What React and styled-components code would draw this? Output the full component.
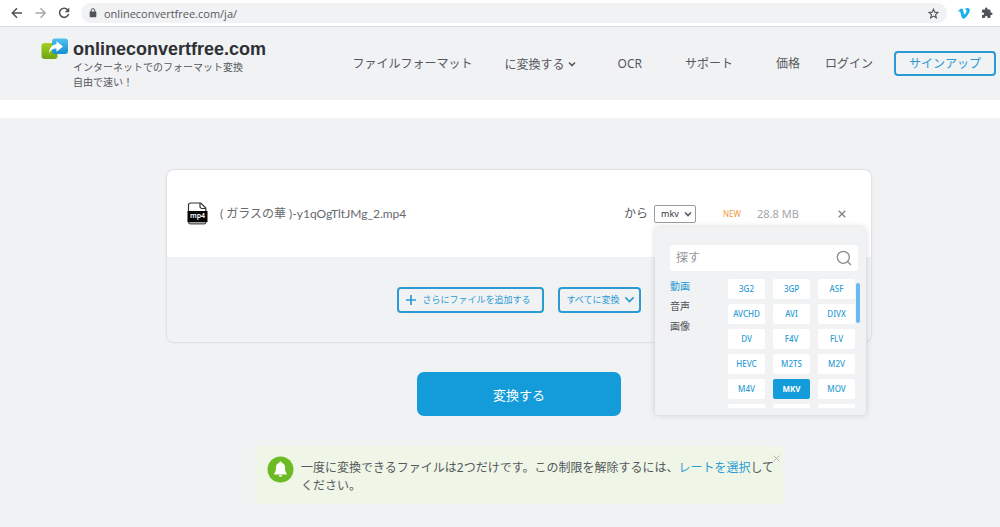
import React, { useState } from "react";
import styled, { createGlobalStyle } from "styled-components";

const GlobalStyle = createGlobalStyle`
  * {
    box-sizing: border-box;
  }
  body {
    margin: 0;
    background-color: #f1f2f4;
    color: #55585c;
    font-family: "Noto Sans", "Noto Sans CJK JP", sans-serif;
    font-size: 12px;
    line-height: 18px;
  }
  button,
  input,
  select {
    font-family: inherit;
  }
  a {
    text-decoration: none;
  }
  svg {
    display: block;
    flex: none;
  }
`;

const BrowserBar = styled.div`
  display: flex;
  align-items: center;
  gap: 11px;
  height: 27px;
  padding: 0 7px 0 10px;
  background-color: #fff;
  border-bottom: 1px solid #dcdde0;
`;

const IconButton = styled.button`
  display: flex;
  padding: 0;
  border: none;
  background: none;
  color: ${({ $color }) => $color || "#505357"};
  cursor: pointer;
`;

const AddressBar = styled.div`
  flex: 1;
  display: flex;
  align-items: center;
  gap: 7px;
  height: 20px;
  padding: 0 8px;
  border-radius: 10px;
  background-color: #f1f2f4;
`;

const Address = styled.input`
  flex: 1;
  padding: 0;
  border: none;
  outline: none;
  background: none;
  color: #55585c;
  font-family: "Open Sans", sans-serif;
  font-size: 11px;
`;

const Header = styled.header`
  display: flex;
  align-items: center;
  justify-content: space-between;
  height: 73px;
  padding: 0 4px 0 41px;
`;

const Brand = styled.a`
  display: flex;
  gap: 5px;
  color: #55585c;
`;

const BrandName = styled.div`
  color: #2d3036;
  font-family: "Liberation Sans", sans-serif;
  font-size: 18px;
  font-weight: 700;
  line-height: 22px;
`;

const Tagline = styled.div`
  font-size: 10px;
  line-height: 15px;
`;

const Nav = styled.nav`
  display: flex;
  align-items: center;
  gap: 32px;
`;

const NavLink = styled.a`
  margin-right: ${({ $wide }) => ($wide ? "11px" : "0")};
  color: #55585c;
`;

const NavMenu = styled.button`
  display: flex;
  align-items: center;
  gap: 3px;
  margin-right: 10px;
  padding: 0;
  border: none;
  background: none;
  color: #55585c;
  font-size: 12px;
  cursor: pointer;
`;

const Account = styled.div`
  display: flex;
  align-items: center;
  gap: 21px;
  margin-left: -7px;
`;

const SignUp = styled.a`
  padding: 2px 13px;
  border: 2px solid #2b9bd4;
  border-radius: 4px;
  color: #2b9bd4;
  line-height: 17px;
`;

const Strip = styled.div`
  height: 18px;
  background-color: #fff;
`;

const Main = styled.main`
  display: flex;
  flex-direction: column;
  align-items: center;
  padding: 51px 0 24px 38px;
`;

const Card = styled.section`
  width: 100%;
  max-width: 706px;
  border: 1px solid #e0e2e5;
  border-radius: 8px;
  box-shadow: 0 0 3px rgba(0, 0, 0, 0.06);
`;

const FileRow = styled.div`
  display: flex;
  align-items: center;
  height: 87px;
  padding: 0 25px 0 20px;
  border-radius: 8px 8px 0 0;
  background-color: #fff;
`;

const FileName = styled.span`
  flex: 1;
  margin-left: 12px;
  color: #66696d;
  font-family: Lato, "Noto Sans CJK JP", sans-serif;
`;

const TargetLabel = styled.label`
  margin-right: 6px;
`;

const Target = styled.div`
  position: relative;
  display: flex;
  align-items: center;
`;

const TargetSelect = styled.select`
  width: 42px;
  height: 18px;
  padding: 0 0 0 6px;
  appearance: none;
  border: 1px solid #9a9da1;
  border-radius: 2px;
  background-color: #fff;
  color: #33363a;
  font-size: 9px;
`;

const SelectArrow = styled.span`
  position: absolute;
  right: 4px;
  pointer-events: none;
`;

const NewBadge = styled.span`
  margin-left: 27px;
  color: #f09a45;
  font-size: 8px;
`;

const FileSize = styled.span`
  width: 81px;
  margin-left: 16px;
  color: #a3a6aa;
  font-size: 11px;
`;

const Popup = styled.div`
  position: absolute;
  z-index: 1;
  top: 22px;
  left: 1px;
  width: 211px;
  padding: 18px 8px 7px 15px;
  border-radius: 4px;
  background-color: #f1f2f4;
  box-shadow: 0 0 6px rgba(0, 0, 0, 0.16);
`;

const Search = styled.div`
  display: flex;
  align-items: center;
  height: 26px;
  margin-bottom: 8px;
  padding: 0 6px;
  border-radius: 3px;
  background-color: #fff;
  color: #8a8d91;
`;

const SearchInput = styled.input`
  flex: 1;
  min-width: 0;
  padding: 0;
  border: none;
  outline: none;
  background: none;
  font-size: 12px;

  &::placeholder {
    color: #94979b;
  }
`;

const PopupBody = styled.div`
  display: flex;
  align-items: flex-start;
  margin-right: -2px;
`;

const Categories = styled.div`
  flex: 1;
  display: flex;
  flex-direction: column;
  align-items: flex-start;
`;

const Category = styled.button`
  padding: 0;
  border: none;
  background: none;
  color: ${({ $active }) => ($active ? "#2b9bd4" : "#505357")};
  font-size: 10px;
  line-height: 20px;
  margin-top: -3px;
  margin-bottom: 3px;
  cursor: pointer;
`;

const Formats = styled.div`
  display: grid;
  grid-template-columns: repeat(3, 37px);
  grid-auto-rows: 20px;
  gap: 5px 8px;
  height: 129px;
  overflow-y: auto;
  scrollbar-width: none;
`;

const Format = styled.button`
  padding: 0;
  border: none;
  border-radius: 2px;
  background-color: ${({ $active }) => ($active ? "#149bd9" : "#fff")};
  color: ${({ $active }) => ($active ? "#fff" : "#2b9bd4")};
  font-size: 8px;
  font-weight: ${({ $active }) => ($active ? 700 : 500)};
  cursor: pointer;
`;

const ScrollThumb = styled.div`
  width: 4px;
  height: 40px;
  margin: 4px 0 0 1px;
  border-radius: 2px;
  background-color: #6cb8f3;
`;

const CardActions = styled.div`
  display: flex;
  align-items: center;
  justify-content: center;
  gap: 14px;
  height: 85px;
`;

const OutlineButton = styled.button`
  display: flex;
  align-items: center;
  gap: ${({ $gap }) => $gap};
  height: 26px;
  padding: ${({ $padding }) => $padding};
  border: 2px solid #2b9bd4;
  border-radius: 4px;
  background: none;
  color: #2b9bd4;
  font-size: 9px;
  cursor: pointer;
`;

const ConvertButton = styled.button`
  width: 204px;
  height: 44px;
  margin-top: 29px;
  border: none;
  border-radius: 7px;
  background-color: #149bd9;
  color: #fff;
  font-size: 13px;
  cursor: pointer;
`;

const Notice = styled.aside`
  position: relative;
  display: flex;
  gap: 7px;
  width: 100%;
  max-width: 528px;
  margin-top: 30px;
  padding: 10px 6px 9px 12px;
  background-color: #eff6e7;
`;

const NoticeText = styled.p`
  margin: 3px 0 0;
`;

const NoticeLink = styled.a`
  color: #2b9bd4;
`;

const NoticeClose = styled(IconButton)`
  position: absolute;
  top: 9px;
  right: 3px;
`;

const Chevron = ({ size = 8, width = 1.6 }) => (
  <svg width={size} height={size} viewBox="0 0 8 8" fill="none" stroke="currentColor" strokeWidth={width}>
    <path d="M1 2.5 4 5.5 7 2.5" />
  </svg>
);

const Cross = ({ size = 8, width = 1.4 }) => (
  <svg width={size} height={size} viewBox="0 0 8 8" stroke="currentColor" strokeWidth={width}>
    <path d="M0.7 0.7 7.3 7.3M7.3 0.7 0.7 7.3" />
  </svg>
);

const ArrowIcon = ({ flip }) => (
  <svg width="13" height="12" viewBox="0 0 13 12" fill="none" stroke="currentColor" strokeWidth="1.5">
    <path d={flip ? "M1.5 6H11M6.5 1.3 11.2 6 6.5 10.7" : "M12 6H2.5M7 1.3 2.3 6 7 10.7"} />
  </svg>
);

const ReloadIcon = () => (
  <svg width="12" height="12" viewBox="0 0 12 12">
    <path d="M10 3.2A4.6 4.6 0 1 0 10.6 7" fill="none" stroke="currentColor" strokeWidth="1.5" />
    <path d="M11.3.6V5.2H6.7Z" fill="currentColor" />
  </svg>
);

const LockIcon = () => (
  <svg width="8" height="10" viewBox="0 0 8 10">
    <rect x="0.7" y="3.6" width="6.6" height="5.6" rx="0.6" fill="#505357" />
    <path d="M2.2 4V2.5a1.8 1.8 0 0 1 3.6 0V4" fill="none" stroke="#505357" />
  </svg>
);

const StarIcon = () => (
  <svg width="11" height="11" viewBox="0 0 24 24" fill="none" stroke="currentColor" strokeWidth="2.4">
    <path d="m12 2.5 2.8 6.6 7.1.6-5.4 4.7 1.7 7L12 17.600l-6.200 3.800 1.700-7L2.100 9.700l7.100-.6Z" />
  </svg>
);

const VimeoIcon = () => (
  <svg width="12" height="11" viewBox="0 0 24 22">
    <path
      d="M23.500 5.600c-.1 2.300-1.700 5.500-4.800 9.500C15.500 19.300 12.800 21.400 10.600 21.400c-1.400 0-2.500-1.300-3.500-3.800L5.200 10.500C4.500 8 3.700 6.700 2.900 6.700c-.2 0-.8.400-1.800 1L0 6.300C3.500 3.200 5.500 1.200 6.900 1.100c2-.2 3.300 1.200 3.800 4.200.8 5 1.400 7.600 2.100 7.600.6 0 1.500-1 2.700-2.900s1.800-3.300 1.900-4.300c.2-1.600-.5-2.400-1.900-2.400-.7 0-1.400.1-2.100.4C14.800.8 17.400-.7 20.500.3c2.200.1 3.200 1.900 3 5.300Z"
      fill="#1ab1e8"
    />
  </svg>
);

const PuzzleIcon = () => (
  <svg width="12" height="12" viewBox="0 0 24 24">
    <path
      d="M20.500 11H19V7a2 2 0 0 0-2-2h-4V3.500a2.500 2.500 0 0 0-5 0V5H4a2 2 0 0 0-2 2v3.800h1.500a2.700 2.700 0 0 1 0 5.400H2V20a2 2 0 0 0 2 2h3.800v-1.500a2.700 2.700 0 0 1 5.400 0V22H17a2 2 0 0 0 2-2v-4h1.500a2.500 2.500 0 0 0 0-5Z"
      fill="currentColor"
    />
  </svg>
);

const LogoIcon = () => (
  <svg width="27" height="22" viewBox="0 0 27 22">
    <defs>
      <linearGradient id="logoGreen" x1="0" y1="0" x2="0" y2="1">
        <stop offset="0" stopColor="#a5cf22" />
        <stop offset="1" stopColor="#6da513" />
      </linearGradient>
      <linearGradient id="logoBlue" x1="0" y1="0" x2="0" y2="1">
        <stop offset="0" stopColor="#4fc1ee" />
        <stop offset="1" stopColor="#168fd0" />
      </linearGradient>
    </defs>
    <rect x="0.500" y="5" width="16" height="16" rx="3" fill="url(#logoGreen)" />
    <rect x="11" y="0.500" width="16" height="15.500" rx="3" fill="url(#logoBlue)" />
    <path d="M8 15.500C8.500 9.500 11 6.500 15.500 6.300V3.200L22 8.500 15.500 13.800V10.500C12 10.300 9.800 12 8 15.500Z" fill="#fff" />
  </svg>
);

const Mp4Icon = () => (
  <svg width="21" height="23" viewBox="0 0 21 23">
    <path d="M1.500 10V3a2 2 0 0 1 2-2h10.300L18.800 6v4" fill="#fff" stroke="#333" strokeWidth="1.200" />
    <path d="M13 1v3.500a2 2 0 0 0 2 2h4" fill="none" stroke="#333" strokeWidth="1.200" />
    <path d="M1.500 18v1.800a2 2 0 0 0 2 2h13.500a2 2 0 0 0 2-2V18" fill="#aaa" stroke="#555" strokeWidth="1.200" />
    <rect x="0.500" y="9" width="20" height="11" rx="0.500" fill="#050505" />
    <text x="10.500" y="16" fill="#fff" fontSize="7" fontWeight="600" textAnchor="middle">
      mp4
    </text>
  </svg>
);

const SearchIcon = () => (
  <svg width="16" height="16" viewBox="0 0 16 16" fill="none" stroke="currentColor" strokeWidth="1.300">
    <circle cx="7.300" cy="7.300" r="6" />
    <path d="m11.700 11.700 3.300 3.300" />
  </svg>
);

const PlusIcon = () => (
  <svg width="10" height="10" viewBox="0 0 10 10" stroke="currentColor" strokeWidth="1.700">
    <path d="M5 0v10M0 5h10" />
  </svg>
);

const BellIcon = () => (
  <svg width="27" height="27" viewBox="0 0 27 27">
    <circle cx="13.500" cy="13.500" r="13" fill="#6cbb24" />
    <path
      d="M13.500 5.500c.8 0 1.200.5 1.200 1.200 2.300.6 3.400 2.300 3.400 4.800 0 3.300.4 4.800 1.700 6v.9H7.200v-.9c1.300-1.200 1.700-2.700 1.700-6 0-2.500 1.100-4.200 3.400-4.800 0-.7.400-1.200 1.200-1.200ZM11.800 19.200h3.400c-.2 1-.8 1.500-1.700 1.500s-1.500-.5-1.700-1.500Z"
      fill="#fff"
    />
  </svg>
);

const categories = ["動画", "音声", "画像"];

const formats = [
  "3G2", "3GP", "ASF",
  "AVCHD", "AVI", "DIVX",
  "DV", "F4V", "FLV",
  "HEVC", "M2TS", "M2V",
  "M4V", "MKV", "MOV",
  "MP4", "MPEG", "MPG",
];

const App = () => {
  const [format, setFormat] = useState("MKV");
  const [category, setCategory] = useState("動画");

  return (
    <>
      <GlobalStyle />
      <BrowserBar>
        <IconButton aria-label="戻る">
          <ArrowIcon />
        </IconButton>
        <IconButton aria-label="進む" $color="#a5a8ac">
          <ArrowIcon flip />
        </IconButton>
        <IconButton aria-label="再読み込み">
          <ReloadIcon />
        </IconButton>
        <AddressBar>
          <LockIcon />
          <Address aria-label="アドレス" defaultValue="onlineconvertfree.com/ja/" />
          <IconButton aria-label="ブックマーク">
            <StarIcon />
          </IconButton>
        </AddressBar>
        <IconButton aria-label="Vimeo">
          <VimeoIcon />
        </IconButton>
        <IconButton aria-label="拡張機能">
          <PuzzleIcon />
        </IconButton>
      </BrowserBar>

      <Header>
        <Brand href="#">
          <LogoIcon />
          <div>
            <BrandName>onlineconvertfree.com</BrandName>
            <Tagline>
              インターネットでのフォーマット変換
              <br />
              自由で速い！
            </Tagline>
          </div>
        </Brand>
        <Nav>
          <NavLink href="#">ファイルフォーマット</NavLink>
          <NavMenu>
            に変換する
            <Chevron />
          </NavMenu>
          <NavLink href="#" $wide>OCR</NavLink>
          <NavLink href="#" $wide>サポート</NavLink>
          <NavLink href="#">価格</NavLink>
          <Account>
            <NavLink href="#">ログイン</NavLink>
            <SignUp href="#">サインアップ</SignUp>
          </Account>
        </Nav>
      </Header>
      <Strip />

      <Main>
        <Card>
          <FileRow>
            <Mp4Icon />
            <FileName>( ガラスの華 )-y1qOgTltJMg_2.mp4</FileName>
            <TargetLabel htmlFor="target">から</TargetLabel>
            <Target>
              <TargetSelect id="target" value={format} onChange={(e) => setFormat(e.target.value)}>
                {formats.map((name) => (
                  <option key={name} value={name}>
                    {name.toLowerCase()}
                  </option>
                ))}
              </TargetSelect>
              <SelectArrow>
                <Chevron />
              </SelectArrow>
              <Popup>
                <Search>
                  <SearchInput aria-label="探す" placeholder="探す" />
                  <SearchIcon />
                </Search>
                <PopupBody>
                  <Categories>
                    {categories.map((name) => (
                      <Category key={name} $active={name === category} onClick={() => setCategory(name)}>
                        {name}
                      </Category>
                    ))}
                  </Categories>
                  <Formats>
                    {formats.map((name) => (
                      <Format key={name} $active={name === format} onClick={() => setFormat(name)}>
                        {name}
                      </Format>
                    ))}
                  </Formats>
                  <ScrollThumb />
                </PopupBody>
              </Popup>
            </Target>
            <NewBadge>NEW</NewBadge>
            <FileSize>28.8 MB</FileSize>
            <IconButton aria-label="削除" $color="#7f858b">
              <Cross />
            </IconButton>
          </FileRow>
          <CardActions>
            <OutlineButton $gap="6px" $padding="0 11px 0 7px">
              <PlusIcon />
              さらにファイルを追加する
            </OutlineButton>
            <OutlineButton $gap="4px" $padding="0 4px 0 7px">
              すべてに変換
              <Chevron size={11} width={1.2} />
            </OutlineButton>
          </CardActions>
        </Card>

        <ConvertButton>変換する</ConvertButton>

        <Notice>
          <BellIcon />
          <NoticeText>
            一度に変換できるファイルは2つだけです。この制限を解除するには、
            <NoticeLink href="#">レートを選択</NoticeLink>
            してください。
          </NoticeText>
          <NoticeClose aria-label="閉じる" $color="#a9afa5">
            <Cross size={7} width={1} />
          </NoticeClose>
        </Notice>
      </Main>
    </>
  );
};

export default App;
